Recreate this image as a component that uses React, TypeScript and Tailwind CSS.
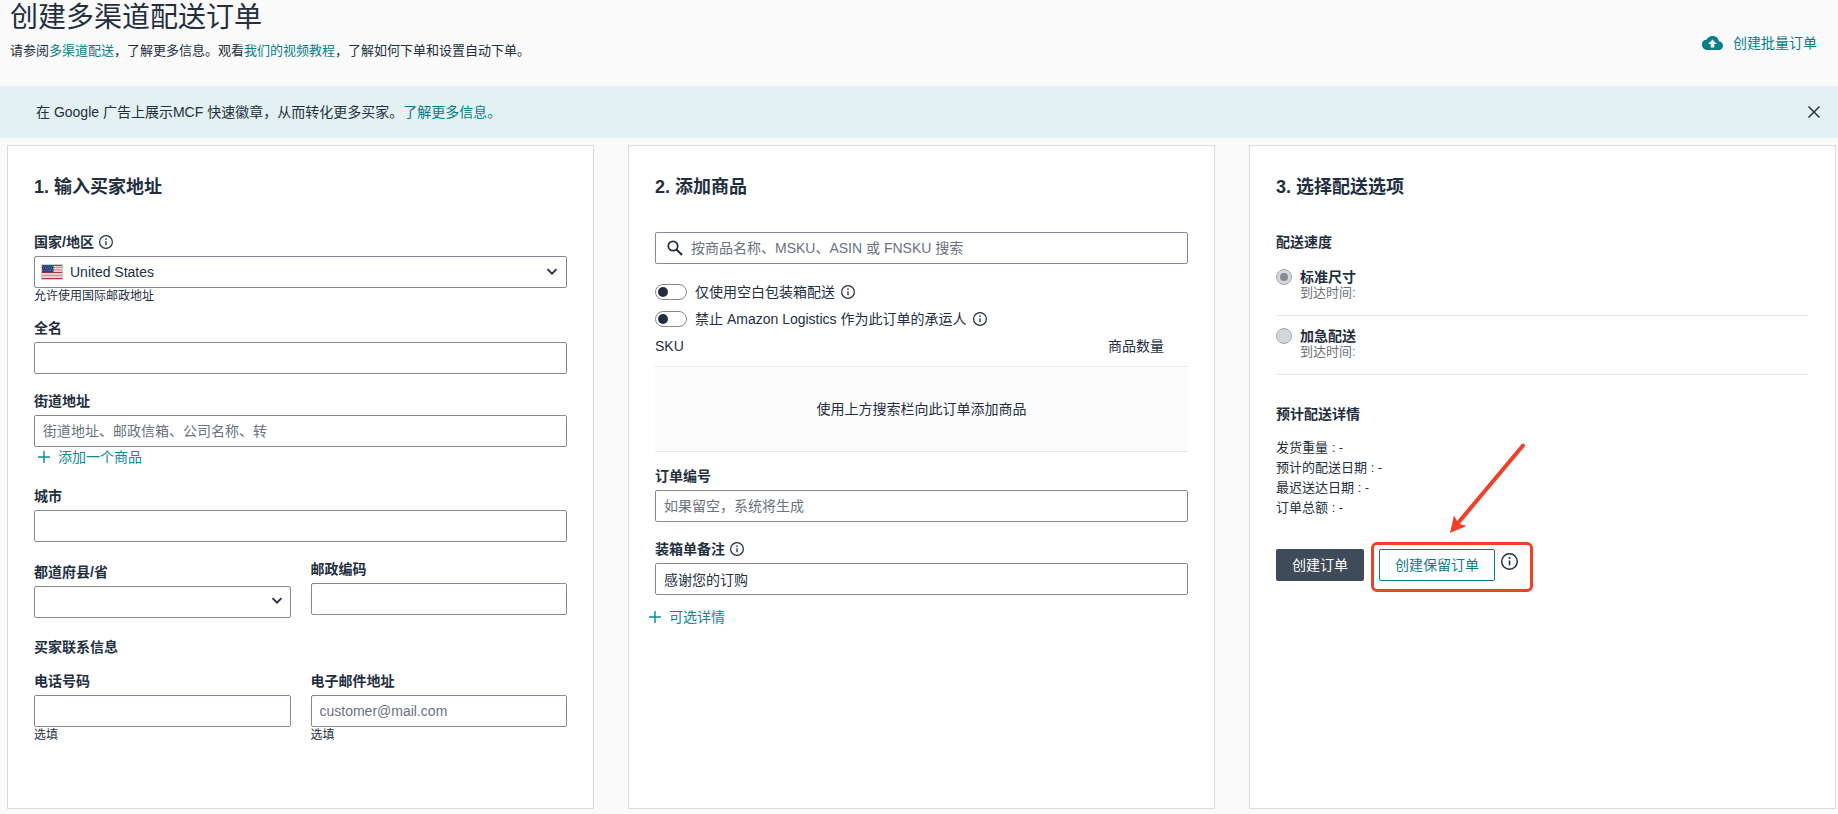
import React, { useState } from 'react';

const InfoIcon = ({ className }: { className: string }) => (
  <svg viewBox="0 0 16 16" className={className} fill="none" aria-hidden="true">
    <circle cx="8" cy="8" r="7.3" stroke="currentColor" strokeWidth="1.4" />
    <path d="M8 7v4.6" stroke="currentColor" strokeWidth="1.5" />
    <circle cx="8" cy="4.8" r="0.95" fill="currentColor" />
  </svg>
);

const PlusIcon = () => (
  <svg viewBox="0 0 12 12" className="size-3 shrink-0" fill="none" aria-hidden="true">
    <path d="M6 0v12M0 6h12" stroke="currentColor" strokeWidth="1.4" />
  </svg>
);

const ChevronIcon = () => (
  <svg viewBox="0 0 12 8" className="pointer-events-none absolute right-2 top-[11px] h-2 w-3" fill="none" aria-hidden="true">
    <path d="M1.5 1.2 6 5.700l4.500-4.500" stroke="#232f3f" strokeWidth="1.8" />
  </svg>
);

const FlagIcon = () => (
  <svg viewBox="0 0 22 16" className="h-4 w-[22px] shrink-0" aria-hidden="true">
    <rect width="22" height="16" fill="#f0cdd1" />
    <path d="M0 1.5h22M0 8.500h22M0 14.500h22" stroke="#b9343f" strokeWidth="1" />
    <path d="M0 3.500h22M0 6h22M0 11.500h22" stroke="#d9848b" strokeWidth="0.9" />
    <rect width="12.500" height="8.500" fill="#33427a" />
    <path d="M1 2h11M2 4.200h10M1 6.400h11" stroke="#7681ab" strokeWidth="0.7" strokeDasharray="1 1" />
    <rect x="0.5" y="0.5" width="21" height="15" fill="none" stroke="#c9ccd1" />
  </svg>
);

const CloudUploadIcon = () => (
  <svg viewBox="0 4 24 16" className="h-[14px] w-[21px] shrink-0" fill="currentColor" aria-hidden="true">
    <path d="M19.35 10.04A7.49 7.49 0 0 0 12 4C9.11 4 6.6 5.64 5.35 8.04A5.994 5.994 0 0 0 0 14c0 3.31 2.69 6 6 6h13c2.76 0 5-2.24 5-5 0-2.64-2.05-4.78-4.65-4.96zM14 13v4h-4v-4H7l5-5 5 5h-3z" />
  </svg>
);

const inputClass =
  'block h-8 w-full rounded-xs border border-[#848b95] bg-white px-2 text-sm text-[#232f3f] outline-none placeholder:text-[#697281] placeholder:opacity-100';

interface FieldProps {
  id: string;
  label: string;
  placeholder?: string;
  defaultValue?: string;
  info?: boolean;
  hint?: string;
}

const Field = ({ id, label, placeholder, defaultValue, info, hint }: FieldProps) => (
  <div>
    <div className="mb-1 flex items-center gap-[5px]">
      <label htmlFor={id} className="text-sm leading-5 font-bold">{label}</label>
      {info && <InfoIcon className="size-[14px]" />}
    </div>
    <input id={id} className={inputClass} placeholder={placeholder} defaultValue={defaultValue} />
    {hint && <p className="text-xs leading-4">{hint}</p>}
  </div>
);

const Panel = ({ title, children }: { title: string; children: React.ReactNode }) => (
  <section className="border border-[#d5dbdb] bg-white px-[26px] pt-[27px]">
    <h2 className="text-lg leading-7 font-bold">{title}</h2>
    {children}
  </section>
);

const Toggle = ({ id, label }: { id: string; label: string }) => (
  <div className="flex items-center gap-2">
    <input
      id={id}
      type="checkbox"
      role="switch"
      className="h-4 w-8 shrink-0 appearance-none rounded-full border border-[#848b95] bg-white p-[2px] before:block before:size-[10px] before:rounded-full before:bg-[#232f3f] checked:before:ml-4"
    />
    <label htmlFor={id} className="text-sm leading-5">{label}</label>
    <InfoIcon className="-ml-[2px] size-[14px]" />
  </div>
);

const speeds = [
  { id: 'standard', label: '标准尺寸' },
  { id: 'expedited', label: '加急配送' },
];

const details = ['发货重量', '预计的配送日期', '最迟送达日期', '订单总额'];

const App = () => {
  const [speed, setSpeed] = useState('standard');
  const [showBanner, setShowBanner] = useState(true);

  return (
    <div className="min-h-screen bg-[#fafafa] pb-[5px] font-['Liberation_Sans','Noto_Sans_CJK_SC',sans-serif] text-[#232f3f]">
      <header className="flex items-start justify-between pr-[21px] pb-[25px] pl-[10px]">
        <div>
          <h1 className="text-[28px] leading-9">创建多渠道配送订单</h1>
          <p className="mt-[5px] text-[13px] leading-5">
            请参阅<a href="#mcf" className="text-[#077d8c]">多渠道配送</a>，了解更多信息。观看
            <a href="#video" className="text-[#077d8c]">我们的视频教程</a>，了解如何下单和设置自动下单。
          </p>
        </div>
        <a href="#bulk" className="mt-[33px] flex items-center gap-[10px] text-sm leading-5 text-[#077d8c]">
          <CloudUploadIcon />
          创建批量订单
        </a>
      </header>

      {showBanner && (
        <div className="mb-[7px] flex h-[52px] items-center justify-between bg-[#e3f1f2] pr-[18px] pl-9">
          <p className="text-sm leading-5">
            在 Google 广告上展示MCF 快速徽章，从而转化更多买家。
            <a href="#learn" className="text-[#077d8c]">了解更多信息。</a>
          </p>
          <button type="button" aria-label="关闭" onClick={() => setShowBanner(false)}>
            <svg viewBox="0 0 12 12" className="size-3" fill="none">
              <path d="m.5.5 11 11M11.5.5l-11 11" stroke="#232f3f" strokeWidth="1.5" />
            </svg>
          </button>
        </div>
      )}

      <main className="grid grid-cols-3 gap-[34px] pr-[2px] pl-[7px]">
        <Panel title="1. 输入买家地址">
          <div className="mt-[31px] pb-[65px]">
            <div className="mb-1 flex items-center gap-[5px]">
              <label htmlFor="country" className="text-sm leading-5 font-bold">国家/地区</label>
              <InfoIcon className="size-[14px]" />
            </div>
            <div className="relative flex h-8 items-center rounded-xs border border-[#848b95] bg-white pl-[6px]">
              <FlagIcon />
              <select id="country" className="h-full flex-1 appearance-none bg-transparent pl-[7px] text-sm outline-none">
                <option>United States</option>
              </select>
              <ChevronIcon />
            </div>
            <p className="text-xs leading-4">允许使用国际邮政地址</p>

            <div className="mt-[14px]">
              <Field id="name" label="全名" />
            </div>
            <div className="mt-[17px]">
              <Field id="street" label="街道地址" placeholder="街道地址、邮政信箱、公司名称、转" />
            </div>
            <button type="button" className="ml-1 flex items-center gap-2 text-sm leading-5 text-[#078a9a]">
              <PlusIcon />
              添加一个商品
            </button>
            <div className="mt-[19px]">
              <Field id="city" label="城市" />
            </div>

            <div className="mt-[17px] grid grid-cols-2 gap-5">
              <div className="pt-[3px]">
                <label htmlFor="state" className="mb-1 block text-sm leading-5 font-bold">都道府县/省</label>
                <div className="relative">
                  <select id="state" className={`${inputClass} appearance-none`} />
                  <ChevronIcon />
                </div>
              </div>
              <Field id="zip" label="邮政编码" />
            </div>

            <h3 className="mt-[19px] text-sm leading-5 font-bold">买家联系信息</h3>
            <div className="mt-[14px] grid grid-cols-2 gap-5">
              <Field id="phone" label="电话号码" hint="选填" />
              <Field id="email" label="电子邮件地址" placeholder="customer@mail.com" hint="选填" />
            </div>
          </div>
        </Panel>

        <Panel title="2. 添加商品">
          <div className="relative mt-[31px]">
            <svg viewBox="0 0 16 16" className="absolute top-2 left-3 size-4" fill="none" aria-hidden="true">
              <circle cx="6" cy="6" r="4.7" stroke="#232f3f" strokeWidth="1.8" />
              <path d="m9.500 9.500 5.500 5.500" stroke="#232f3f" strokeWidth="2.1" />
            </svg>
            <input
              type="search"
              aria-label="搜索商品"
              placeholder="按商品名称、MSKU、ASIN 或 FNSKU 搜索"
              className="block h-8 w-full rounded-xs border border-[#848b95] bg-white pr-2 pl-[35px] text-sm outline-none placeholder:text-[#697281] placeholder:opacity-100"
            />
          </div>
          <div className="mt-[18px] flex flex-col gap-[7px]">
            <Toggle id="blank-box" label="仅使用空白包装箱配送" />
            <Toggle id="block-carrier" label="禁止 Amazon Logistics 作为此订单的承运人" />
          </div>
          <table className="mt-[7px] w-full text-sm leading-5">
            <thead>
              <tr className="border-b border-[#e7e9e9]">
                <th className="pb-[10px] text-left font-normal">SKU</th>
                <th className="pr-6 pb-[10px] text-right font-normal">商品数量</th>
              </tr>
            </thead>
            <tbody>
              <tr className="border-b border-[#e7e9e9] bg-[#fcfcfc]">
                <td colSpan={2} className="py-8 text-center">使用上方搜索栏向此订单添加商品</td>
              </tr>
            </tbody>
          </table>
          <div className="mt-[14px]">
            <Field id="order-id" label="订单编号" placeholder="如果留空，系统将生成" />
          </div>
          <div className="mt-[17px]">
            <Field id="note" label="装箱单备注" defaultValue="感谢您的订购" info />
          </div>
          <button type="button" className="mt-3 -ml-[6px] flex items-center gap-2 text-sm leading-5 text-[#078a9a]">
            <PlusIcon />
            可选详情
          </button>
        </Panel>

        <Panel title="3. 选择配送选项">
          <h3 className="mt-[31px] text-sm leading-5 font-bold">配送速度</h3>
          <div className="mt-[17px]">
            {speeds.map((item) => (
              <div key={item.id} className="mb-3 flex gap-2 border-b border-[#e7e9e9] pb-[14px]">
                <input
                  id={item.id}
                  type="radio"
                  name="speed"
                  checked={speed === item.id}
                  onChange={() => setSpeed(item.id)}
                  className="grid size-4 shrink-0 appearance-none place-items-center rounded-full border border-[#a2a8b0] bg-[#d5d7dc] checked:before:size-2 checked:before:rounded-full checked:before:bg-[#848b95]"
                />
                <div>
                  <label htmlFor={item.id} className="block text-sm leading-4 font-bold">{item.label}</label>
                  <p className="text-[13px] leading-4 text-[#6c6f75]">到达时间:</p>
                </div>
              </div>
            ))}
          </div>

          <h3 className="mt-[29px] text-sm leading-5 font-bold">预计配送详情</h3>
          <ul className="mt-[14px] text-[13px] leading-5">
            {details.map((item) => (
              <li key={item}>{item} : -</li>
            ))}
          </ul>

          <div className="mt-6 flex items-start">
            <button type="button" className="mt-[7px] h-8 rounded-xs bg-[#3f4b59] px-4 text-sm text-white">创建订单</button>
            <div className="relative ml-[7px] flex h-[50px] items-start gap-[6px] rounded-md border-[3px] border-[#ef4028] pt-1 pr-3 pl-[5px]">
              <button type="button" className="h-8 rounded-xs border border-[#077d8c] bg-white px-[15px] text-sm text-[#077d8c]">
                创建保留订单
              </button>
              <InfoIcon className="mt-1 size-[17px]" />
              {/* arrow pointing at the reserve order button */}
              <svg viewBox="0 0 77 92" className="absolute -top-[102px] left-[75px] h-[92px] w-[77px]" fill="#ef4028" aria-hidden="true">
                <path d="M74 2.500 9 80" stroke="#ef4028" strokeWidth="4" strokeLinecap="round" />
                <path d="M1 90 5 72.500l3.500 6 3.500 3 5.500 1.500z" />
              </svg>
            </div>
          </div>
        </Panel>
      </main>
    </div>
  );
};

export default App;
